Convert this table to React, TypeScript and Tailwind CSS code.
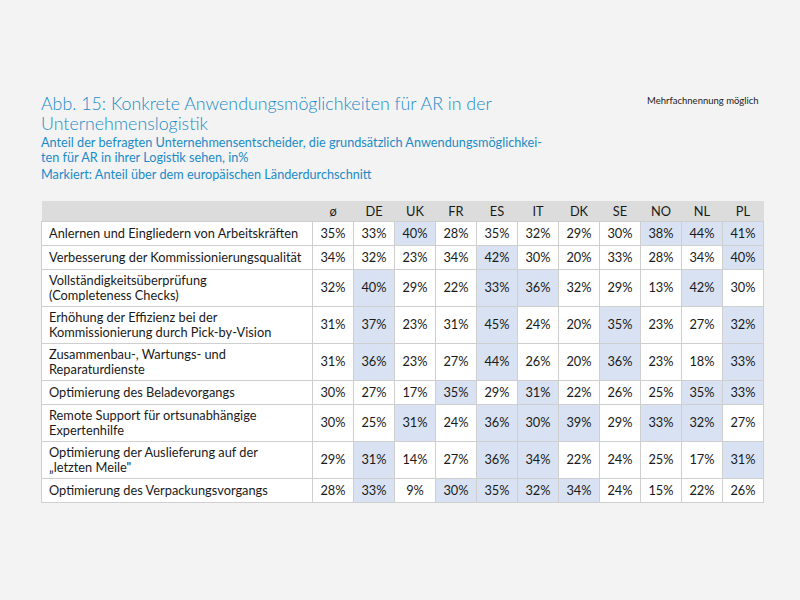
import React from "react";

const cols = ["ø", "DE", "UK", "FR", "ES", "IT", "DK", "SE", "NO", "NL", "PL"];

type Row = { label: React.ReactNode; vals: number[]; hl: string[] };

const rows: Row[] = [
  { label: "Anlernen und Eingliedern von Arbeitskräften", vals: [35, 33, 40, 28, 35, 32, 29, 30, 38, 44, 41], hl: ["UK", "NO", "NL", "PL"] },
  { label: "Verbesserung der Kommissionierungsqualität", vals: [34, 32, 23, 34, 42, 30, 20, 33, 28, 34, 40], hl: ["ES", "PL"] },
  { label: <>Vollständigkeitsüberprüfung<br />(Completeness Checks)</>, vals: [32, 40, 29, 22, 33, 36, 32, 29, 13, 42, 30], hl: ["DE", "ES", "IT", "NL"] },
  { label: <>Erhöhung der Effizienz bei der<br />Kommissionierung durch Pick-by-Vision</>, vals: [31, 37, 23, 31, 45, 24, 20, 35, 23, 27, 32], hl: ["DE", "ES", "SE", "PL"] },
  { label: <>Zusammenbau-, Wartungs- und<br />Reparaturdienste</>, vals: [31, 36, 23, 27, 44, 26, 20, 36, 23, 18, 33], hl: ["DE", "ES", "SE", "PL"] },
  { label: "Optimierung des Beladevorgangs", vals: [30, 27, 17, 35, 29, 31, 22, 26, 25, 35, 33], hl: ["FR", "IT", "NL", "PL"] },
  { label: <>Remote Support für ortsunabhängige<br />Expertenhilfe</>, vals: [30, 25, 31, 24, 36, 30, 39, 29, 33, 32, 27], hl: ["UK", "ES", "IT", "DK", "NO", "NL"] },
  { label: <>Optimierung der Auslieferung auf der<br />„letzten Meile"</>, vals: [29, 31, 14, 27, 36, 34, 22, 24, 25, 17, 31], hl: ["DE", "ES", "IT", "PL"] },
  { label: "Optimierung des Verpackungsvorgangs", vals: [28, 33, 9, 30, 35, 32, 34, 24, 15, 22, 26], hl: ["DE", "FR", "ES", "IT", "DK"] },
];

const twoLine = [2, 3, 4, 6, 7];

export default function App() {
  return (
    <div className="w-[800px] h-[600px] bg-[#f3f3f3] text-[#1a1a1a] relative" style={{ fontFamily: "Lato, 'Open Sans', sans-serif" }}>
      <div className="absolute left-[647px] top-[94px] text-[9.5px] text-[#222]">Mehrfachnennung möglich</div>
      <div className="pl-[41px] pt-[93px]">
        <div className="text-[#1b8bc9] text-[17.8px] font-light leading-[20px] w-[500px]">
          Abb. 15: Konkrete Anwendungsmöglichkeiten für AR in der Unternehmenslogistik
        </div>
        <div className="text-[#1b8bc9] text-[12.7px] leading-[15px] mt-[2px]">
          Anteil der befragten Unternehmensentscheider, die grundsätzlich Anwendungsmöglichkei-<br />
          ten für AR in ihrer Logistik sehen, in%
        </div>
        <div className="text-[#1b8bc9] text-[12.7px] leading-[15px] mt-[2px]">
          Markiert: Anteil über dem europäischen Länderdurchschnitt
        </div>
        <table className="mt-[19px] border-collapse text-[12.8px] w-[721px] table-fixed">
          <colgroup>
            <col className="w-[271px]" />
            {cols.map((c) => (
              <col key={c} className="w-[41px]" />
            ))}
          </colgroup>
          <thead>
            <tr className="bg-[#dcdcdc] h-[20px]">
              <th className="font-normal p-0"></th>
              {cols.map((c) => (
                <th key={c} className="font-normal text-center p-0 leading-[20px]">{c}</th>
              ))}
            </tr>
          </thead>
          <tbody>
            {rows.map((r, i) => (
              <tr key={i} className={twoLine.includes(i) ? "h-[37px]" : "h-[24px]"}>
                <td className="bg-white border border-[#cfcfcf] pl-[7px] p-0 leading-[15px] align-middle">{r.label}</td>
                {r.vals.map((v, j) => (
                  <td
                    key={j}
                    className={
                      "border border-[#cfcfcf] p-0 text-center align-middle " +
                      (r.hl.includes(cols[j]) ? "bg-[#d8e2f3]" : "bg-white")
                    }
                  >
                    {v}%
                  </td>
                ))}
              </tr>
            ))}
          </tbody>
        </table>
      </div>
    </div>
  );
}
